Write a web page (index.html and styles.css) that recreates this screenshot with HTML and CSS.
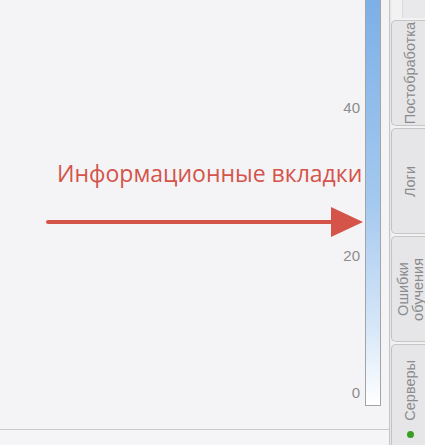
FILE: index.html
```html
<!DOCTYPE html>
<html lang="ru">

<head>
    <meta charset="UTF-8">
    <title>Информационные вкладки</title>
    <link rel="stylesheet" href="styles.css">
</head>

<body>

    <div class="layout">
        <!-- Main chart area -->
        <div class="main">
            <div class="chart">
                <div class="legend">
                    <div class="legend-axis">
                        <span class="tick" style="top: 107px">40</span>
                        <span class="tick" style="top: 255px">20</span>
                        <span class="tick" style="top: 392px">0</span>
                    </div>
                    <div class="colorbar"></div>
                </div>
            </div>

            <!-- Annotation -->
            <div class="note">
                <div class="note-text">Информационные вкладки</div>
                <svg class="note-arrow" width="330" height="34" viewBox="0 0 330 34">
                    <line x1="4" y1="17" x2="292" y2="17" stroke="#d4544a" stroke-width="4" stroke-linecap="round" />
                    <polygon points="287,2 319,17 287,32" fill="#d4544a" />
                </svg>
            </div>
            <div class="footer"></div>
        </div>

        <!-- Side tabs -->
        <div class="tabs">
            <div class="tabs-top"></div>
            <div class="tab"><span>Постобработка</span></div>
            <div class="tab"><span>Логи</span></div>
            <div class="tab"><span>Ошибки<br>обучения</span></div>
            <div class="tab tab-last"><span>Серверы</span><i class="dot"></i></div>
        </div>
    </div>

</body>

</html>
```

FILE: styles.css
```css
html,
body {
    margin: 0;
    height: 100%;
    overflow: hidden;
}

body {
    font-family: "Liberation Sans", Arial, sans-serif;
    background: #f4f4f7;
}

.layout {
    display: flex;
    height: 445px;
}

/* Main area */
.main {
    position: relative;
    width: 389px;
    display: flex;
    flex-direction: column;
    border-right: 1px solid #c4c4c6;
    box-shadow: 1px 0 2px rgba(0, 0, 0, 0.06);
}

.chart {
    height: 429px;
    border-bottom: 1px solid #c9c9cb;
    display: flex;
    justify-content: flex-end;
}

.footer {
    flex: 1;
    background: #f5f5f7;
}

.legend {
    display: flex;
    margin-right: 8px;
}

.legend-axis {
    position: relative;
    width: 40px;
}

.tick {
    position: absolute;
    right: 5px;
    transform: translateY(-50%);
    font-size: 15px;
    color: #8c8c8c;
}

.colorbar {
    width: 14px;
    height: 405px;
    border: 1px solid #a3a3a6;
    border-top: none;
    background: linear-gradient(#7db0e6, #a4c9ef 50%, #d5e6f8 80%, #ffffff);
}

/* Annotation */
.note {
    position: absolute;
    left: 44px;
    top: 157px;
}

.note-text {
    margin-left: 13px;
    font-family: "Open Sans", sans-serif;
    font-size: 23px;
    color: #d4544a;
    white-space: nowrap;
}

.note-arrow {
    display: block;
    margin-top: 16px;
}

/* Tabs */
.tabs {
    flex: 1;
    display: flex;
    flex-direction: column;
    gap: 2px;
    background: #f2f2f3;
    padding-left: 1px;
    overflow: hidden;
}

.tabs-top {
    flex: none;
    height: 18px;
    margin-left: 11px;
    border-left: 1px solid #dadadc;
    background: #e9e9eb;
}

.tab {
    flex: none;
    height: 106px;
    width: 38px;
    box-sizing: border-box;
    background: #e6e6e8;
    border: 1px solid #c6c6c8;
    border-right: none;
    border-radius: 5px 0 0 5px;
    display: flex;
    flex-direction: column;
    align-items: center;
    justify-content: center;
    gap: 10px;
}

.tab span {
    writing-mode: vertical-rl;
    transform: rotate(180deg);
    font-size: 14.5px;
    line-height: 15px;
    color: #8b8b8b;
    text-align: center;
}

.tab-last {
    height: 110px;
    justify-content: flex-start;
    padding-top: 15px;
    border-bottom: none;
}

.dot {
    width: 7px;
    height: 7px;
    border-radius: 50%;
    background: #3a9e22;
}
```
